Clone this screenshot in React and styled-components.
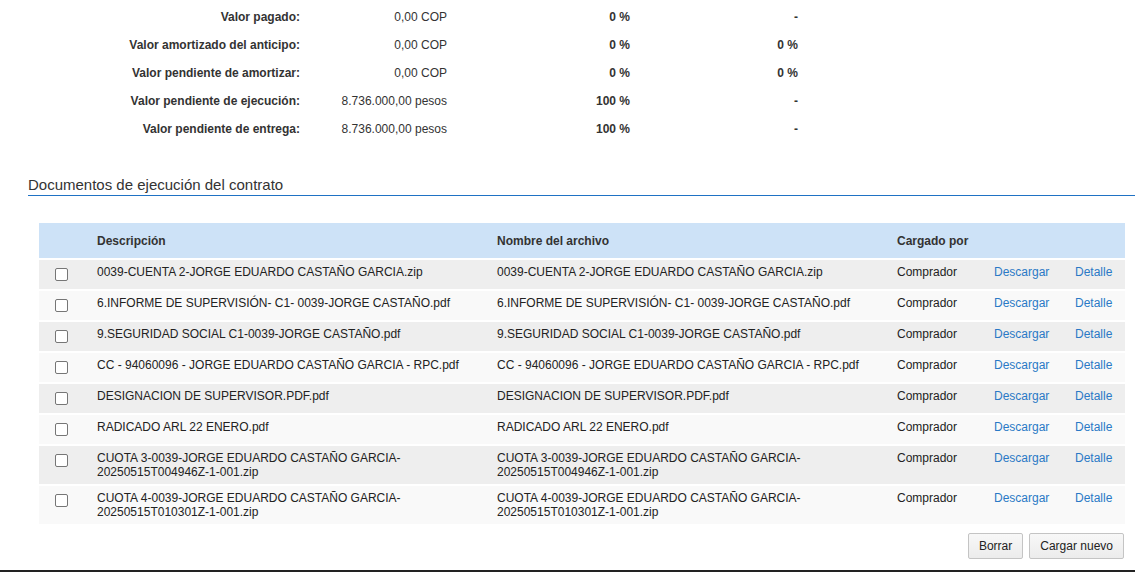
import React from "react";
import styled, { createGlobalStyle } from "styled-components";

const GlobalStyle = createGlobalStyle`
	html, body {
		margin: 0;
		padding: 0;
		background: #fff;
	}
	body {
		font-family: "Liberation Sans", Arial, sans-serif;
		font-size: 12px;
		color: #333;
	}
`;

const Page = styled.div`
	width: 1135px;
	height: 572px;
	box-sizing: border-box;
	display: flex;
	flex-direction: column;
	border-bottom: 2px solid #222;
	overflow: hidden;
`;

const Summary = styled.div`
	display: grid;
	grid-template-columns: 300px 147px 183px 168px;
	grid-auto-rows: 28px;
	padding-top: 3px;
`;

const Cell = styled.div`
	display: flex;
	align-items: center;
	justify-content: flex-end;
	font-weight: ${(p) => (p.$bold ? "bold" : "normal")};
	color: #333;
`;

const SectionTitle = styled.div`
	margin: 33px 0 0 28px;
	padding-bottom: 1px;
	border-bottom: 1px solid #1f72c4;
	font-size: 15px;
	color: #333;
	line-height: 18px;
`;

const Table = styled.div`
	margin: 27px 10px 0 39px;
	display: flex;
	flex-direction: column;
	gap: 2px;
`;

const cols = "58px 400px 400px 97px 81px 50px";

const HeadRow = styled.div`
	display: grid;
	grid-template-columns: ${cols};
	height: 35px;
	align-items: center;
	background: #cde2f7;
	font-weight: bold;
	color: #333;
`;

const Row = styled.div`
	display: grid;
	grid-template-columns: ${cols};
	min-height: 29px;
	box-sizing: border-box;
	padding: 5px 0;
	align-items: start;
	line-height: 14px;
	background: ${(p) => (p.$odd ? "#eeeeee" : "#f9f9f9")};
	color: #222;
`;

const Check = styled.span`
	display: block;
	width: 11px;
	height: 11px;
	margin: 3px 0 0 16px;
	border: 1px solid #767676;
	border-radius: 2px;
	background: #fff;
`;

const Link = styled.a`
	color: #2a79c6;
	text-decoration: none;
	cursor: pointer;
`;

const Actions = styled.div`
	display: flex;
	justify-content: flex-end;
	gap: 6px;
	margin: 9px 11px 0 0;
`;

const Button = styled.button`
	height: 26px;
	padding: 0 10px;
	font-family: "Liberation Sans", Arial, sans-serif;
	font-size: 12px;
	color: #222;
	background: linear-gradient(#f8f8f8, #ececec);
	border: 1px solid #c4c4c4;
	border-radius: 2px;
`;

const summary = [
	["Valor pagado:", "0,00 COP", "0 %", "-"],
	["Valor amortizado del anticipo:", "0,00 COP", "0 %", "0 %"],
	["Valor pendiente de amortizar:", "0,00 COP", "0 %", "0 %"],
	["Valor pendiente de ejecución:", "8.736.000,00 pesos", "100 %", "-"],
	["Valor pendiente de entrega:", "8.736.000,00 pesos", "100 %", "-"],
];

const docs = [
	"0039-CUENTA 2-JORGE EDUARDO CASTAÑO GARCIA.zip",
	"6.INFORME DE SUPERVISIÓN- C1- 0039-JORGE CASTAÑO.pdf",
	"9.SEGURIDAD SOCIAL C1-0039-JORGE CASTAÑO.pdf",
	"CC - 94060096 - JORGE EDUARDO CASTAÑO GARCIA - RPC.pdf",
	"DESIGNACION DE SUPERVISOR.PDF.pdf",
	"RADICADO ARL 22 ENERO.pdf",
	"CUOTA 3-0039-JORGE EDUARDO CASTAÑO GARCIA-\n20250515T004946Z-1-001.zip",
	"CUOTA 4-0039-JORGE EDUARDO CASTAÑO GARCIA-\n20250515T010301Z-1-001.zip",
];

const Multi = ({ text }) =>
	text.split("\n").map((line, i) => (
		<React.Fragment key={i}>
			{i > 0 && <br />}
			{line}
		</React.Fragment>
	));

export default function App() {
	return (
		<>
			<GlobalStyle />
			<Page>
				<Summary>
					{summary.map(([label, value, pct, amort]) => (
						<React.Fragment key={label}>
							<Cell $bold>{label}</Cell>
							<Cell>{value}</Cell>
							<Cell $bold>{pct}</Cell>
							<Cell $bold>{amort}</Cell>
						</React.Fragment>
					))}
				</Summary>

				<SectionTitle>Documentos de ejecución del contrato</SectionTitle>

				<Table>
					<HeadRow>
						<span />
						<span>Descripción</span>
						<span>Nombre del archivo</span>
						<span>Cargado por</span>
						<span />
						<span />
					</HeadRow>
					{docs.map((name, i) => (
						<Row key={i} $odd={i % 2 === 0}>
							<Check />
							<span>
								<Multi text={name} />
							</span>
							<span>
								<Multi text={name} />
							</span>
							<span>Comprador</span>
							<Link>Descargar</Link>
							<Link>Detalle</Link>
						</Row>
					))}
				</Table>

				<Actions>
					<Button>Borrar</Button>
					<Button>Cargar nuevo</Button>
				</Actions>
			</Page>
		</>
	);
}
